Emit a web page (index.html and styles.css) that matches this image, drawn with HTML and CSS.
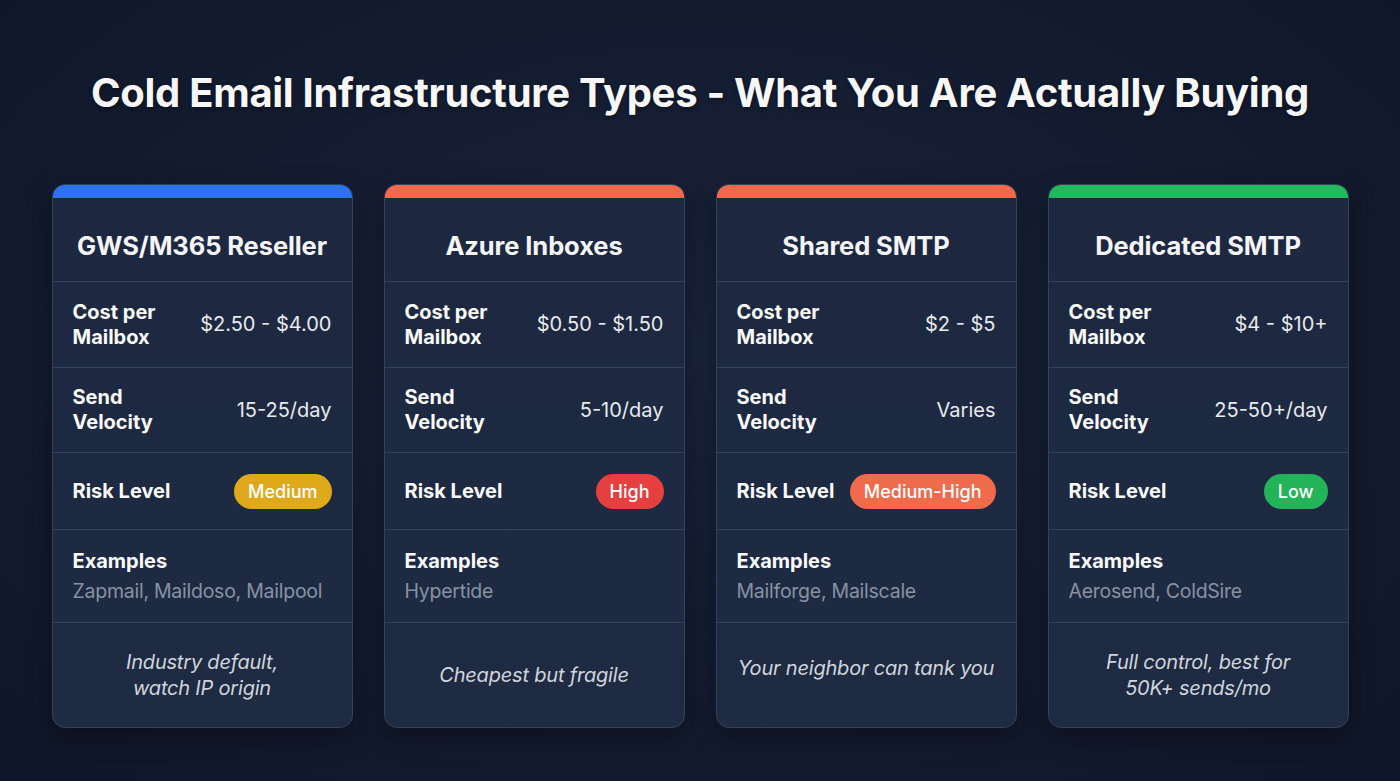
FILE: index.html
```html
<!DOCTYPE html>
<html lang="en">
<head>
<meta charset="utf-8">
<title>Cold Email Infrastructure Types</title>
<link rel="stylesheet" href="styles.css">
</head>
<body>
<main class="page">
  <h1 class="title">Cold Email Infrastructure Types - What You Are Actually Buying</h1>
  <section class="cards">
    <article class="card">
      <div class="bar bar-blue"></div>
      <h2 class="card-title">GWS/M365 Reseller</h2>
      <div class="row row-cost"><span class="label">Cost per<br>Mailbox</span><span class="value">$2.50 - $4.00</span></div>
      <div class="row row-vel"><span class="label">Send<br>Velocity</span><span class="value">15-25/day</span></div>
      <div class="row row-risk"><span class="label">Risk Level</span><span class="badge badge-medium">Medium</span></div>
      <div class="row row-ex"><span class="label">Examples</span><span class="examples">Zapmail, Maildoso, Mailpool</span></div>
      <div class="foot"><p>Industry default,<br>watch IP origin</p></div>
    </article>
    <article class="card">
      <div class="bar bar-orange"></div>
      <h2 class="card-title">Azure Inboxes</h2>
      <div class="row row-cost"><span class="label">Cost per<br>Mailbox</span><span class="value">$0.50 - $1.50</span></div>
      <div class="row row-vel"><span class="label">Send<br>Velocity</span><span class="value">5-10/day</span></div>
      <div class="row row-risk"><span class="label">Risk Level</span><span class="badge badge-high">High</span></div>
      <div class="row row-ex"><span class="label">Examples</span><span class="examples">Hypertide</span></div>
      <div class="foot"><p>Cheapest but fragile</p></div>
    </article>
    <article class="card">
      <div class="bar bar-orange"></div>
      <h2 class="card-title">Shared SMTP</h2>
      <div class="row row-cost"><span class="label">Cost per<br>Mailbox</span><span class="value">$2 - $5</span></div>
      <div class="row row-vel"><span class="label">Send<br>Velocity</span><span class="value">Varies</span></div>
      <div class="row row-risk"><span class="label">Risk Level</span><span class="badge badge-medhigh">Medium-High</span></div>
      <div class="row row-ex"><span class="label">Examples</span><span class="examples">Mailforge, Mailscale</span></div>
      <div class="foot foot-up"><p>Your neighbor can tank you</p></div>
    </article>
    <article class="card">
      <div class="bar bar-green"></div>
      <h2 class="card-title">Dedicated SMTP</h2>
      <div class="row row-cost"><span class="label">Cost per<br>Mailbox</span><span class="value">$4 - $10+</span></div>
      <div class="row row-vel"><span class="label">Send<br>Velocity</span><span class="value">25-50+/day</span></div>
      <div class="row row-risk"><span class="label">Risk Level</span><span class="badge badge-low">Low</span></div>
      <div class="row row-ex"><span class="label">Examples</span><span class="examples">Aerosend, ColdSire</span></div>
      <div class="foot"><p>Full control, best for<br>50K+ sends/mo</p></div>
    </article>
  </section>
</main>
</body>
</html>
```

FILE: styles.css
```css
* { box-sizing: border-box; }
html, body { margin: 0; padding: 0; }
body {
  width: 1400px;
  height: 781px;
  overflow: hidden;
  background: radial-gradient(ellipse at 50% 45%, #19233b 0%, #131b2f 60%, #0f1628 100%);
  font-family: Inter, "Noto Sans", sans-serif;
  color: #fff;
}
.page {
  display: flex;
  flex-direction: column;
  align-items: center;
  padding-top: 66px;
}
.title {
  margin: 0;
  font-size: 40px;
  line-height: 54px;
  font-weight: 700;
  letter-spacing: -0.3px;
  color: #f7f7f8;
  text-shadow: 0 2px 4px rgba(0,0,0,0.35);
}
.cards {
  display: flex;
  gap: 31px;
  margin-top: 64px;
}
.card {
  width: 301px;
  height: 544px;
  background: linear-gradient(180deg, #1d2840 0%, #1e2b42 100%);
  border: 1.5px solid #33425d;
  border-radius: 13px;
  overflow: hidden;
  display: flex;
  flex-direction: column;
  box-shadow: 0 8px 24px rgba(0,0,0,0.35);
}
.bar { height: 13px; flex: none; }
.bar-blue { background: #2f72ee; }
.bar-orange { background: #ef6a4c; }
.bar-green { background: #22b85c; }
.card-title {
  margin: 0;
  height: 84px;
  flex: none;
  display: flex;
  align-items: center;
  justify-content: center;
  padding-top: 12px;
  font-size: 25.5px;
  font-weight: 700;
  color: #f5f5f7;
  letter-spacing: -0.1px;
  border-bottom: 1.5px solid #33425d;
}
.row {
  flex: none;
  display: flex;
  align-items: center;
  justify-content: space-between;
  padding: 0 20px;
  border-bottom: 1.5px solid #33425d;
}
.row-cost { height: 86px; }
.row-vel { height: 85px; }
.row-risk { height: 77px; }
.row-ex {
  height: 93px;
  flex-direction: column;
  align-items: flex-start;
  justify-content: center;
  gap: 3px;
  padding-top: 2px;
}
.label {
  font-size: 20px;
  line-height: 25px;
  font-weight: 700;
  color: #fafafa;
}
.value {
  font-size: 20px;
  line-height: 25px;
  color: #e8eaee;
}
.examples {
  font-size: 19.5px;
  line-height: 28px;
  letter-spacing: -0.25px;
  white-space: nowrap;
  color: #8892a4;
}
.badge {
  display: inline-flex;
  align-items: center;
  height: 35px;
  padding: 0 14px;
  border-radius: 18px;
  font-size: 18px;
  font-weight: 500;
  color: #fff;
}
.badge-medium { background: #e0a91b; }
.badge-high { background: #e5403f; }
.badge-medhigh { background: #f06b4b; }
.badge-low { background: #23b358; }
.foot {
  flex: 1;
  display: flex;
  align-items: center;
  justify-content: center;
  padding: 0 10px;
}
.foot-up { padding: 0 10px 14px; }
.foot p {
  margin: 0;
  text-align: center;
  font-style: italic;
  font-size: 20px;
  line-height: 26px;
  letter-spacing: -0.2px;
  white-space: nowrap;
  color: #d0d5de;
}
```
